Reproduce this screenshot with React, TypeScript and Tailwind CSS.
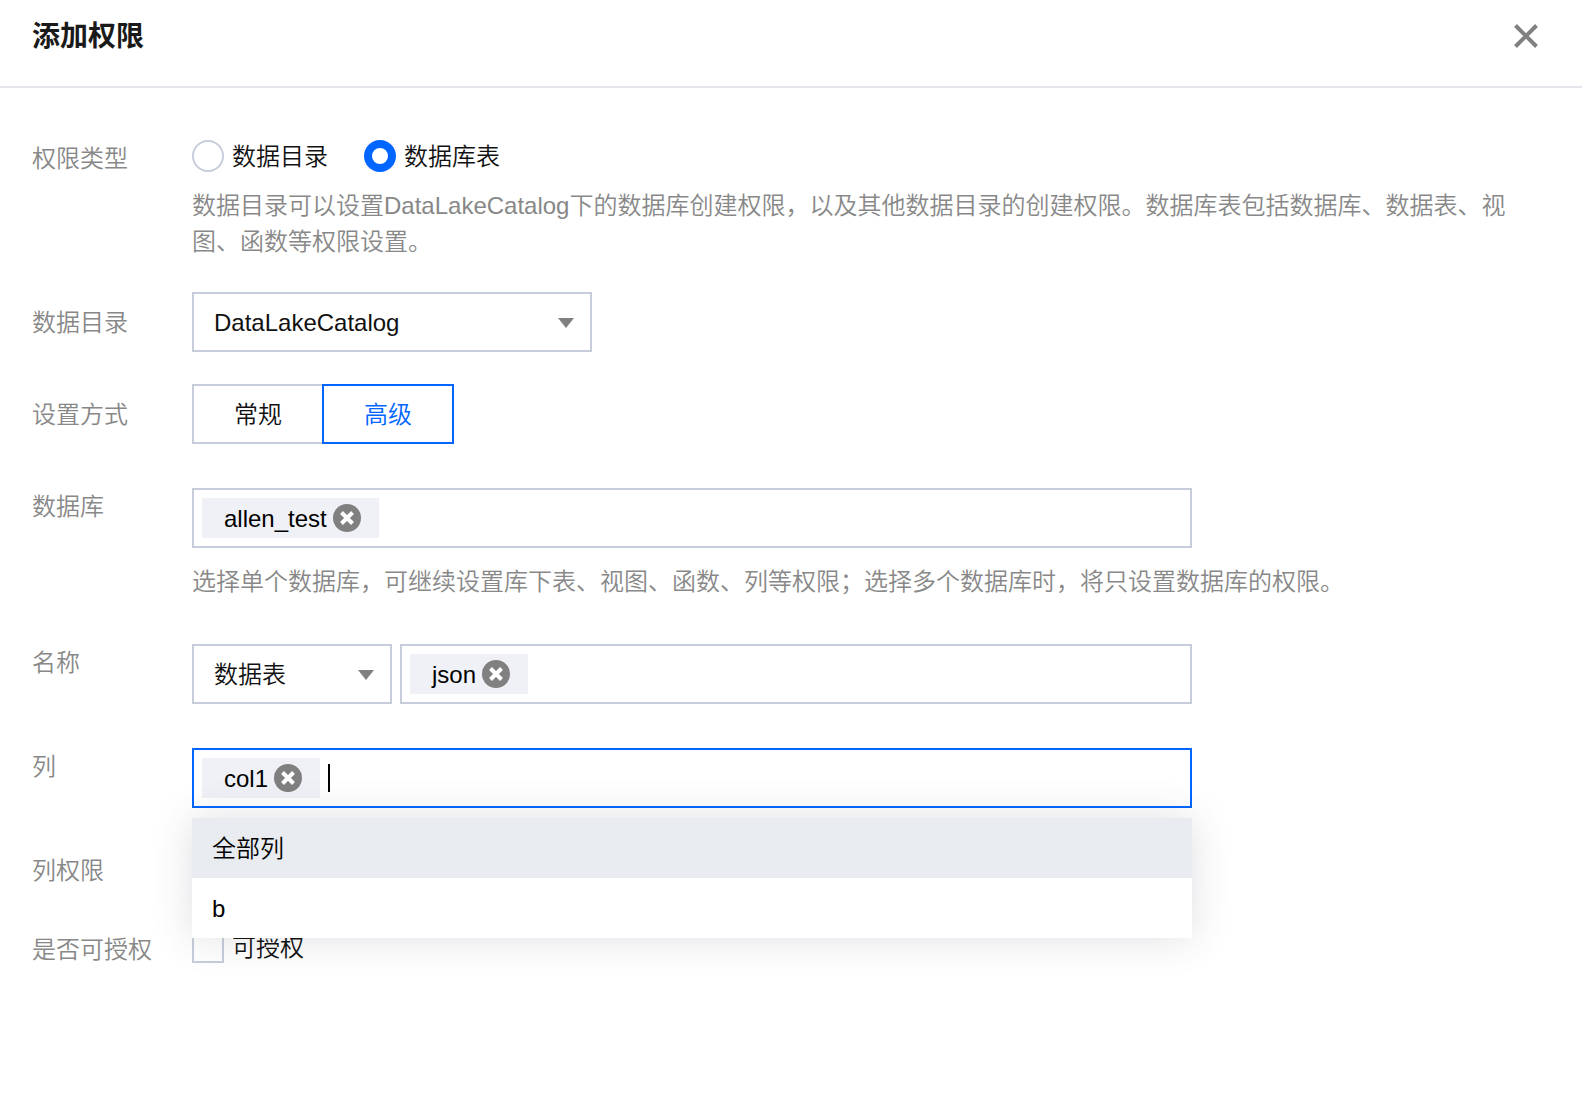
import { useState, type ReactNode } from 'react';

const OPTIONS = ['全部列', 'b'];

interface FieldProps {
  label: string;
  htmlFor?: string;
  middle?: boolean;
  children?: ReactNode;
}

function Field({ label, htmlFor, middle, children }: FieldProps) {
  const cls = `w-40 shrink-0 leading-[38px] text-[#888888] ${middle ? 'pt-3' : ''}`;
  return (
    <div className="flex">
      {htmlFor ? <label htmlFor={htmlFor} className={cls}>{label}</label> : <div className={cls}>{label}</div>}
      <div className="min-w-0 flex-1">{children}</div>
    </div>
  );
}

function Tag({ text, onRemove }: { text: string; onRemove: () => void }) {
  return (
    <span className="flex h-10 shrink-0 items-center gap-1.5 bg-[#f0f1f6] pr-[18px] pl-[22px] text-black">
      <span className="pt-0.5">{text}</span>
      <button type="button" aria-label={`移除 ${text}`} onClick={onRemove} className="block">
        <svg width="28" height="28" viewBox="0 0 28 28" className="block">
          <circle cx="14" cy="14" r="14" fill="#808080" />
          <path d="M8.5 8.5l11 11M19.5 8.5l-11 11" stroke="#fff" strokeWidth="4" />
        </svg>
      </button>
    </span>
  );
}

interface TagBoxProps {
  id: string;
  tags: string[];
  active?: boolean;
  onChange: (tags: string[]) => void;
  onFocus?: () => void;
  label?: string;
}

function TagBox({ id, tags, active, onChange, onFocus, label }: TagBoxProps) {
  const [value, setValue] = useState('');
  return (
    <div className={`flex h-[60px] w-full items-center gap-2 border-2 bg-white px-2 ${active ? 'border-[#0066ff]' : 'border-[#c8cddb]'}`}>
      {tags.map((t) => (
        <Tag key={t} text={t} onRemove={() => onChange(tags.filter((x) => x !== t))} />
      ))}
      <div className="flex flex-1 items-center">
        {active && !value && <span className="h-7 w-0.5 bg-black" />}
        <input
          id={id}
          type="text"
          aria-label={label}
          autoComplete="off"
          value={value}
          onFocus={onFocus}
          onChange={(e) => setValue(e.target.value)}
          className={`min-w-0 flex-1 bg-transparent outline-none ${value ? '' : 'caret-transparent'}`}
        />
      </div>
    </div>
  );
}

function Select({ id, options }: { id: string; options: string[] }) {
  return (
    <div className="relative">
      <select id={id} className="h-[60px] w-full appearance-none border-2 border-[#c8cddb] bg-white pt-0.5 pr-12 pl-5 outline-none">
        {options.map((o) => (
          <option key={o}>{o}</option>
        ))}
      </select>
      <svg width="16" height="10" viewBox="0 0 16 10" className="pointer-events-none absolute top-[26px] right-[18px]">
        <path d="M0 0h16L8 10z" fill="#808080" />
      </svg>
    </div>
  );
}

export default function App() {
  const [type, setType] = useState('数据库表');
  const [mode, setMode] = useState('高级');
  const [databases, setDatabases] = useState(['allen_test']);
  const [tables, setTables] = useState(['json']);
  const [columns, setColumns] = useState(['col1']);
  const [open, setOpen] = useState(true);

  const pick = (option: string) => {
    if (!columns.includes(option)) setColumns([...columns, option]);
    setOpen(false);
  };

  return (
    <div className="min-h-screen bg-white font-['Liberation_Sans','Noto_Sans_CJK_SC',sans-serif] text-[24px] font-[350] text-[#111111]">
      <header className="flex h-[88px] items-center justify-between border-b-2 border-[#e3e7ec] px-8 pb-3.5">
        <h1 className="pt-0.5 text-[28px] leading-9 font-bold text-[#1a1a1a]">添加权限</h1>
        <button type="button" aria-label="关闭" className="flex h-12 w-12 items-center justify-center">
          <svg width="24" height="24" viewBox="0 0 24 24" fill="none" stroke="#808080" strokeWidth="4">
            <path d="M1.5 1.5l21 21M22.5 1.5l-21 21" />
          </svg>
        </button>
      </header>

      <form className="flex flex-col gap-11 pt-[52px] pr-16 pl-8" onSubmit={(e) => e.preventDefault()}>
        {/* Type, catalog and mode sit closer together than the rest */}
        <div className="flex flex-col gap-8">
          <Field label="权限类型">
            <div className="flex gap-9">
              {['数据目录', '数据库表'].map((t) => (
                <label key={t} className="flex h-8 items-center gap-2">
                  <input
                    type="radio"
                    name="type"
                    checked={type === t}
                    onChange={() => setType(t)}
                    className="h-8 w-8 appearance-none rounded-full border-2 border-[#c8cddb] bg-white checked:border-8 checked:border-[#0066ff]"
                  />
                  <span className="pt-0.5">{t}</span>
                </label>
              ))}
            </div>
            <p className="pt-4 leading-9 text-[#888888]">
              数据目录可以设置DataLakeCatalog下的数据库创建权限，以及其他数据目录的创建权限。数据库表包括数据库、数据表、视图、函数等权限设置。
            </p>
          </Field>

          <Field label="数据目录" htmlFor="catalog" middle>
            <div className="max-w-[400px]">
              <Select id="catalog" options={['DataLakeCatalog']} />
            </div>
          </Field>

          <Field label="设置方式" middle>
            <div className="flex">
              {['常规', '高级'].map((m) => (
                <button
                  key={m}
                  type="button"
                  aria-pressed={mode === m}
                  onClick={() => setMode(m)}
                  className={`h-[60px] w-[132px] border-2 pt-0.5 last:-ml-0.5 ${mode === m ? 'z-10 border-[#0066ff] text-[#0066ff]' : 'border-[#c8cddb]'}`}
                >
                  {m}
                </button>
              ))}
            </div>
          </Field>
        </div>

        <Field label="数据库" htmlFor="database">
          <div className="max-w-[1000px]">
            <TagBox id="database" tags={databases} onChange={setDatabases} />
          </div>
          <p className="pt-4 leading-9 text-[#888888]">
            选择单个数据库，可继续设置库下表、视图、函数、列等权限；选择多个数据库时，将只设置数据库的权限。
          </p>
        </Field>

        <Field label="名称" htmlFor="kind">
          <div className="flex max-w-[1000px] gap-2">
            <div className="w-[200px] shrink-0">
              <Select id="kind" options={['数据表', '视图', '函数']} />
            </div>
            <TagBox id="table" label="数据表名称" tags={tables} onChange={setTables} />
          </div>
        </Field>

        <Field label="列" htmlFor="column">
          <div className="relative max-w-[1000px]">
            <TagBox id="column" tags={columns} active={open} onChange={setColumns} onFocus={() => setOpen(true)} />
            {open && (
              <ul className="absolute top-full left-0 z-20 mt-2.5 w-full bg-white shadow-[0_0_40px_rgba(54,58,80,0.16)]">
                {OPTIONS.map((o) => (
                  <li key={o}>
                    <button
                      type="button"
                      onClick={() => pick(o)}
                      className="h-[60px] w-full px-5 pt-0.5 text-left text-black hover:bg-[#e8ebf0] data-[on=true]:bg-[#e8ebf0]"
                      data-on={o === OPTIONS[0]}
                    >
                      {o}
                    </button>
                  </li>
                ))}
              </ul>
            )}
          </div>
        </Field>

        <div className="flex flex-col gap-[41px]">
          <Field label="列权限" />

          <Field label="是否可授权">
            <label className="flex h-8 items-center gap-2">
              <input
                type="checkbox"
                className="h-8 w-8 appearance-none border-2 border-[#c8cddb] bg-white checked:border-[#0066ff] checked:bg-[#0066ff]"
              />
              <span className="pt-0.5">可授权</span>
            </label>
          </Field>
        </div>
      </form>
    </div>
  );
}
